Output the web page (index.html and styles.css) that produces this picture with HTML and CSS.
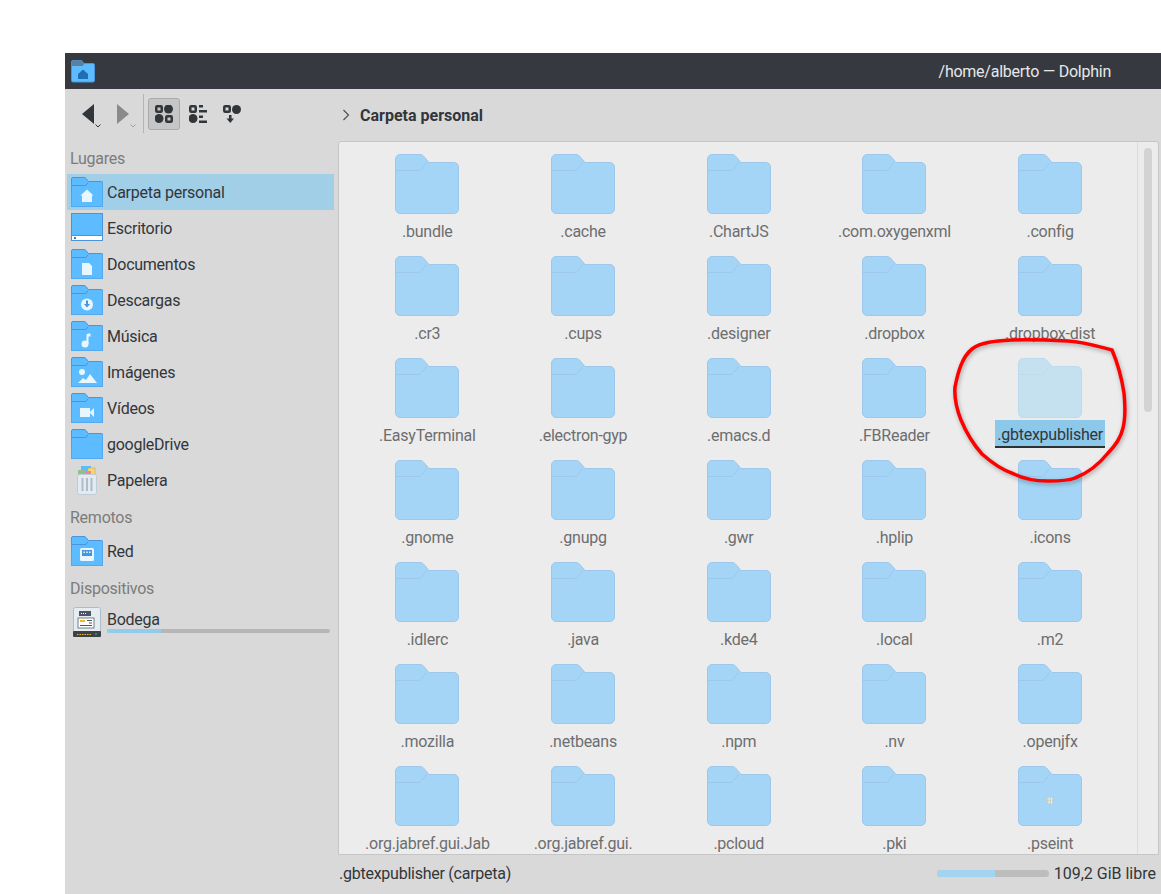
FILE: index.html
```html
<!DOCTYPE html>
<html lang="es">

<head>
    <meta charset="UTF-8">
    <title>/home/alberto — Dolphin</title>
    <link rel="stylesheet" href="styles.css">
</head>

<body>
    <svg class="defs" width="0" height="0">
        <!-- carpeta grande -->
        <symbol id="folder" viewBox="0 0 64 60">
            <path d="M.5 5a4.500 4.500 0 0 1 4.500-4.500h20a5 5 0 0 1 3.500 1.500l5.500 6.500h25a4.500 4.500 0 0 1 4.500 4.500v42a4.500 4.500 0 0 1-4.500 4.500h-54a4.500 4.500 0 0 1-4.500-4.500z" fill="currentColor" stroke="var(--edge)" />
            <path d="M.5 16.500h23q2 0 3-1.500l5-6.500" fill="none" stroke="var(--edge)" />
        </symbol>
        <!-- carpeta lateral -->
        <symbol id="place" viewBox="0 0 32 30">
            <path d="M.5 2a1.500 1.500 0 0 1 1.500-1.500h11q1 0 2 1l2.500 3h13a1.500 1.500 0 0 1 1.500 1.500v22.500a1.500 1.500 0 0 1-1.500 1.500h-29a1.500 1.500 0 0 1-1.500-1.500z" fill="#5cbcff" stroke="#4a94dc" />
            <path d="M1 8.500h14l2-3" fill="none" stroke="#4a94dc" />
        </symbol>
    </svg>

    <div class="window">
        <header class="titlebar">
            <svg class="app-icon" viewBox="0 0 24 23">
                <path d="M.5 2a1.500 1.500 0 0 1 1.500-1.500h8q1 0 1.500 1l1.500 2h9a1.500 1.500 0 0 1 1.500 1.500v15.500a1.500 1.500 0 0 1-1.500 1.500h-20a1.500 1.500 0 0 1-1.500-1.500z" fill="#5cbcff" stroke="#4a94dc" />
                <path d="M.5 2a1.500 1.500 0 0 1 1.500-1.500h8q1 0 1.500 1l1.500 2-1 2.500h-11.500z" fill="#5d7f9e" />
                <path d="M12 9.500l5 4.500v5h-10v-5z" fill="#1f6fb5" />
            </svg>
            <span class="title">/home/alberto — Dolphin</span>
        </header>

        <div class="toolbar">
            <button class="tool nav">
                <svg width="12" height="20" viewBox="0 0 12 20"><path d="M12 0v20L0 10z" fill="#31363b" /></svg>
                <svg class="caret" width="6" height="4" viewBox="0 0 6 4"><path d="M.5.500L3 3 5.500.500" fill="none" stroke="#31363b" /></svg>
            </button>
            <button class="tool nav nav-next">
                <svg width="12" height="20" viewBox="0 0 12 20"><path d="M0 0v20l12-10z" fill="#8a8a8a" /></svg>
                <svg class="caret" width="6" height="4" viewBox="0 0 6 4"><path d="M.5.500L3 3 5.500.500" fill="none" stroke="#a0a0a0" /></svg>
            </button>
            <span class="sep"></span>
            <button class="tool active">
                <svg width="18" height="18" viewBox="0 0 18 18" fill="#31363b">
                    <rect x="1.250" y="1.250" width="5.500" height="5.500" rx="1" fill="none" stroke="#31363b" stroke-width="2.500" />
                    <circle cx="13.500" cy="4" r="4.500" />
                    <circle cx="4" cy="13.500" r="4.500" />
                    <rect x="11.250" y="11.250" width="5.500" height="5.500" rx="1" fill="none" stroke="#31363b" stroke-width="2.500" />
                </svg>
            </button>
            <button class="tool">
                <svg width="18" height="18" viewBox="0 0 18 18" fill="#31363b">
                    <rect x="1.250" y="1.250" width="5.500" height="5.500" rx="1" fill="none" stroke="#31363b" stroke-width="2.500" />
                    <rect x="10" y="0" width="4" height="2.500" />
                    <rect x="10" y="5" width="8" height="2.500" />
                    <circle cx="4" cy="13.500" r="4.500" />
                    <rect x="10" y="10.500" width="4" height="2.500" />
                    <rect x="10" y="15.500" width="8" height="2.500" />
                </svg>
            </button>
            <button class="tool">
                <svg width="18" height="18" viewBox="0 0 18 18" fill="#31363b">
                    <rect x="1.250" y="1.250" width="5.500" height="5.500" rx="1" fill="none" stroke="#31363b" stroke-width="2.500" />
                    <circle cx="13.500" cy="4.500" r="4.500" />
                    <rect x="6" y="10" width="2.500" height="4" />
                    <path d="M3.500 13.500h7.500L7.250 18z" />
                </svg>
            </button>
            <svg class="crumb-arrow" width="8" height="12" viewBox="0 0 8 12"><path d="M1.500 1l5 5-5 5" fill="none" stroke="#4d5257" stroke-width="1.200" /></svg>
            <span class="crumb">Carpeta personal</span>
        </div>

        <div class="main">
            <aside class="sidebar">
                <h2 class="group">Lugares</h2>
                <div class="place selected">
                    <span class="place-icon">
                        <svg viewBox="0 0 32 30"><use href="#place" /><path d="M16 12.500l6.500 6h-1.500v6.500h-10v-6.500h-1.500z" fill="#e8f7ff" /></svg>
                    </span>
                    Carpeta personal
                </div>
                <div class="place">
                    <span class="place-icon">
                        <svg viewBox="0 0 32 30">
                            <rect x=".5" y=".5" width="31" height="27" fill="#5cbcff" stroke="#4a94dc" />
                            <rect x=".5" y="22.500" width="31" height="5" fill="#fff" stroke="#4a94dc" />
                            <rect x="3" y="24" width="2" height="2" fill="#2f7fd0" />
                        </svg>
                    </span>
                    Escritorio
                </div>
                <div class="place">
                    <span class="place-icon">
                        <svg viewBox="0 0 32 30"><use href="#place" /><path d="M11 14h7l3 3v9h-10z" fill="#e8f7ff" /></svg>
                    </span>
                    Documentos
                </div>
                <div class="place">
                    <span class="place-icon">
                        <svg viewBox="0 0 32 30"><use href="#place" /><circle cx="16" cy="19.500" r="6" fill="#e8f7ff" /><path d="M15 15.500h2v3.500h2l-3 3.500-3-3.500h2z" fill="#4a94dc" /></svg>
                    </span>
                    Descargas
                </div>
                <div class="place">
                    <span class="place-icon">
                        <svg viewBox="0 0 32 30"><use href="#place" /><circle cx="14" cy="23" r="3.500" fill="#e8f7ff" /><path d="M15.500 23v-9q0-1.500 2-1.500h2v3h-2v7.500z" fill="#e8f7ff" /></svg>
                    </span>
                    Música
                </div>
                <div class="place">
                    <span class="place-icon">
                        <svg viewBox="0 0 32 30"><use href="#place" /><circle cx="11" cy="15" r="3" fill="#e8f7ff" /><path d="M7 26l5-5 3 2 4-6 7 9z" fill="#e8f7ff" /></svg>
                    </span>
                    Imágenes
                </div>
                <div class="place">
                    <span class="place-icon">
                        <svg viewBox="0 0 32 30"><use href="#place" /><rect x="9" y="15" width="10" height="9" fill="#e8f7ff" /><path d="M19 19l4-4v9l-4-4z" fill="#e8f7ff" /></svg>
                    </span>
                    Vídeos
                </div>
                <div class="place">
                    <span class="place-icon">
                        <svg viewBox="0 0 32 30"><use href="#place" /></svg>
                    </span>
                    googleDrive
                </div>
                <div class="place">
                    <span class="place-icon">
                        <svg viewBox="0 0 32 30">
                            <rect x="10" y="1" width="10" height="10" fill="#5cbcff" />
                            <rect x="17" y="3" width="7" height="8" fill="#f6d77d" stroke="#c9a94c" stroke-width=".6" />
                            <rect x="7" y="5" width="8" height="6" fill="#8fc08f" />
                            <rect x="15" y="6" width="5" height="5" fill="#f08a8a" />
                            <rect x="6.500" y="9.500" width="19" height="20" rx="2" fill="#e3ebf0" stroke="#bfcdd8" />
                            <path d="M11.500 13v13M16 13v13M20.500 13v13" stroke="#aebdca" stroke-width="2" />
                        </svg>
                    </span>
                    Papelera
                </div>

                <h2 class="group spaced">Remotos</h2>
                <div class="place">
                    <span class="place-icon">
                        <svg viewBox="0 0 32 30">
                            <use href="#place" />
                            <rect x="9" y="12" width="14" height="13" rx="1.500" fill="#e8f7ff" />
                            <rect x="11" y="14" width="10" height="6" fill="#4a94dc" />
                            <path d="M12.500 15.500h1.500v1.500h-1.500zM15.300 15.500h1.500v1.500h-1.500zM18 15.500h1.500v1.500h-1.500z" fill="#e8f7ff" />
                        </svg>
                    </span>
                    Red
                </div>

                <h2 class="group spaced">Dispositivos</h2>
                <div class="place device">
                    <span class="place-icon">
                        <svg viewBox="0 0 32 30">
                            <rect x="2.500" y=".5" width="27" height="29" rx="2" fill="#e6edf2" stroke="#aebcc8" />
                            <rect x="8" y="4" width="12" height="5" fill="#4b5563" />
                            <path d="M10 6.500h1M12 6.500h1M14 6.500h1" stroke="#fff" />
                            <rect x="7" y="11" width="16" height="10" fill="#fff" stroke="#56606a" stroke-width=".8" />
                            <rect x="9" y="13" width="5" height="2" fill="#f2b91e" />
                            <path d="M16 13.500h5M18 16h3M9 18.500h12" stroke="#4b5563" />
                            <rect x="2" y="24" width="28" height="6" rx="1" fill="#3a4149" />
                            <path d="M6 27.500h15" stroke="#f2b91e" stroke-dasharray="1.500 1" />
                            <path d="M24 27h2" stroke="#3fbfa0" />
                        </svg>
                    </span>
                    <span class="device-info">
                        <span class="device-name">Bodega</span>
                        <span class="meter"><span class="meter-fill" style="width: 24%"></span></span>
                    </span>
                </div>
            </aside>

            <section class="panel">
                <div class="files">
                    <div class="file"><svg class="folder"><use href="#folder" /></svg><span class="name">.bundle</span></div>
                    <div class="file"><svg class="folder"><use href="#folder" /></svg><span class="name">.cache</span></div>
                    <div class="file"><svg class="folder"><use href="#folder" /></svg><span class="name">.ChartJS</span></div>
                    <div class="file"><svg class="folder"><use href="#folder" /></svg><span class="name">.com.oxygenxml</span></div>
                    <div class="file"><svg class="folder"><use href="#folder" /></svg><span class="name">.config</span></div>

                    <div class="file"><svg class="folder"><use href="#folder" /></svg><span class="name">.cr3</span></div>
                    <div class="file"><svg class="folder"><use href="#folder" /></svg><span class="name">.cups</span></div>
                    <div class="file"><svg class="folder"><use href="#folder" /></svg><span class="name">.designer</span></div>
                    <div class="file"><svg class="folder"><use href="#folder" /></svg><span class="name">.dropbox</span></div>
                    <div class="file"><svg class="folder"><use href="#folder" /></svg><span class="name">.dropbox-dist</span></div>

                    <div class="file"><svg class="folder"><use href="#folder" /></svg><span class="name">.EasyTerminal</span></div>
                    <div class="file"><svg class="folder"><use href="#folder" /></svg><span class="name">.electron-gyp</span></div>
                    <div class="file"><svg class="folder"><use href="#folder" /></svg><span class="name">.emacs.d</span></div>
                    <div class="file"><svg class="folder"><use href="#folder" /></svg><span class="name">.FBReader</span></div>
                    <div class="file current"><svg class="folder"><use href="#folder" /></svg><span class="name">.gbtexpublisher</span></div>

                    <div class="file"><svg class="folder"><use href="#folder" /></svg><span class="name">.gnome</span></div>
                    <div class="file"><svg class="folder"><use href="#folder" /></svg><span class="name">.gnupg</span></div>
                    <div class="file"><svg class="folder"><use href="#folder" /></svg><span class="name">.gwr</span></div>
                    <div class="file"><svg class="folder"><use href="#folder" /></svg><span class="name">.hplip</span></div>
                    <div class="file"><svg class="folder"><use href="#folder" /></svg><span class="name">.icons</span></div>

                    <div class="file"><svg class="folder"><use href="#folder" /></svg><span class="name">.idlerc</span></div>
                    <div class="file"><svg class="folder"><use href="#folder" /></svg><span class="name">.java</span></div>
                    <div class="file"><svg class="folder"><use href="#folder" /></svg><span class="name">.kde4</span></div>
                    <div class="file"><svg class="folder"><use href="#folder" /></svg><span class="name">.local</span></div>
                    <div class="file"><svg class="folder"><use href="#folder" /></svg><span class="name">.m2</span></div>

                    <div class="file"><svg class="folder"><use href="#folder" /></svg><span class="name">.mozilla</span></div>
                    <div class="file"><svg class="folder"><use href="#folder" /></svg><span class="name">.netbeans</span></div>
                    <div class="file"><svg class="folder"><use href="#folder" /></svg><span class="name">.npm</span></div>
                    <div class="file"><svg class="folder"><use href="#folder" /></svg><span class="name">.nv</span></div>
                    <div class="file"><svg class="folder"><use href="#folder" /></svg><span class="name">.openjfx</span></div>

                    <div class="file"><svg class="folder"><use href="#folder" /></svg><span class="name">.org.jabref.gui.Jab</span></div>
                    <div class="file"><svg class="folder"><use href="#folder" /></svg><span class="name">.org.jabref.gui.</span></div>
                    <div class="file"><svg class="folder"><use href="#folder" /></svg><span class="name">.pcloud</span></div>
                    <div class="file"><svg class="folder"><use href="#folder" /></svg><span class="name">.pki</span></div>
                    <div class="file">
                        <svg class="folder" viewBox="0 0 64 60">
                            <use href="#folder" width="64" height="60" />
                            <rect x="28" y="31" width="8" height="7" rx="2" fill="#bccbc4" />
                            <path d="M29 33h6M29 36h6M31 31v7M33.500 31v7" stroke="#eef2e6" stroke-width=".7" />
                        </svg>
                        <span class="name">.pseint</span>
                    </div>
                </div>
                <div class="scrollbar"><span class="thumb"></span></div>
            </section>
        </div>

        <footer class="status">
            <span>.gbtexpublisher (carpeta)</span>
            <span class="free">
                <span class="meter free-meter"><span class="meter-fill" style="width: 52%"></span></span>
                <span class="free-text">109,2 GiB libre</span>
            </span>
        </footer>
    </div>

    <!-- circulo rojo dibujado a mano encima de la captura -->
    <svg class="scribble" width="1161" height="894" viewBox="0 0 1161 894">
        <path d="M1112 350C1100 347 1085 342 1068 341C1050 340 1030 339 1012 340C995 341 981 342 972 349C962 357 958 372 955 387C954 400 957 410 961 420C966 432 973 444 982 454C992 463 1002 470 1014 474C1024 479 1036 481 1048 481C1058 481 1068 481 1075 478C1088 473 1100 463 1108 453C1116 445 1121 437 1123 428C1126 416 1125 403 1124 393C1122 380 1118 364 1112 350" />
    </svg>
</body>

</html>
```

FILE: styles.css
```css
* {
    padding: 0;
    margin: 0;
    box-sizing: border-box;
}

html,
body {
    height: 894px;
    overflow: hidden;
    background: #fff;
}

body {
    padding: 53px 0 0 65px;
    font: 16px/24px Roboto, "Liberation Sans", sans-serif;
    letter-spacing: -0.25px;
    color: #31363b;
}

.defs {
    position: absolute;
}

svg {
    display: block;
}

.window {
    display: flex;
    flex-direction: column;
    height: 841px;
    background: #d9d9d9;
}

/* barra de titulo */
.titlebar {
    display: flex;
    justify-content: space-between;
    align-items: center;
    flex: none;
    height: 36px;
    padding: 0 50px 0 6px;
    background: #363a40;
}

.app-icon {
    width: 24px;
    height: 23px;
}

.title {
    margin-top: 2px;
    color: #e6e8ea;
}

/* herramientas */
.toolbar {
    display: flex;
    align-items: center;
    flex: none;
    height: 52px;
    padding: 0 0 3px 8px;
}

.tool {
    display: flex;
    align-items: center;
    justify-content: center;
    width: 32px;
    height: 32px;
    margin-right: 2px;
    border: 1px solid transparent;
    border-radius: 3px;
    background: none;
}

.tool.active {
    background: #c6c6c6;
    border-color: #aaa;
}

.nav {
    position: relative;
    justify-content: flex-start;
    width: 36px;
    margin: 0;
    padding-left: 8px;
}

.nav-next {
    margin: 0 1px 0 -1px;
}

.caret {
    position: absolute;
    left: 21px;
    bottom: 1px;
}

.sep {
    width: 1px;
    height: 39px;
    margin: 0 4px 0 -2px;
    background: #b4b4b4;
}

.crumb-arrow {
    margin: 2px 0 0 92px;
}

.crumb {
    margin: 4px 0 0 10px;
    font-weight: 700;
    letter-spacing: 0;
}

.main {
    display: flex;
    flex: 1;
    min-height: 0;
}

/* lugares */
.sidebar {
    flex: none;
    width: 273px;
    padding: 5px 4px 0 2px;
}

.group {
    height: 24px;
    margin: 0 0 4px 3px;
    padding-top: 1px;
    font-size: 16px;
    font-weight: 400;
    color: #7c7c7c;
}

.group.spaced {
    margin-top: 7px;
}

.place {
    display: flex;
    align-items: center;
    gap: 4px;
    height: 36px;
    padding: 2px 0 0 4px;
}

.place.selected {
    background: #a1cfe7;
}

.place-icon {
    margin-top: -2px;
}

.place-icon svg {
    width: 32px;
    height: 30px;
}

.device-info {
    display: flex;
    flex-direction: column;
    flex: 1;
    margin-right: 4px;
}

.device-name {
    height: 21px;
    margin-top: -5px;
}

.meter {
    display: block;
    height: 4px;
    border-radius: 2px;
    background: #b6b6b6;
    overflow: hidden;
}

.meter-fill {
    display: block;
    height: 100%;
    background: #92cbeb;
}

/* archivos */
.panel {
    display: flex;
    flex: none;
    width: 821px;
    border: 1px solid #c6c6c6;
    border-radius: 3px 3px 0 0;
    background: #ececec;
    overflow: hidden;
}

.files {
    display: grid;
    grid-template-columns: repeat(5, 155.7px);
    grid-auto-rows: 102px;
    flex: none;
    width: 799px;
    padding: 12px 0 0 10.500px;
    border-right: 1px solid #dcdcdc;
}

.file {
    display: flex;
    flex-direction: column;
    align-items: center;
    color: #a4d5f6;
    --edge: #9dc8ec;
}

.folder {
    flex: none;
    width: 64px;
    height: 60px;
    margin-bottom: 6px;
}

.name {
    color: #6c6e70;
    white-space: nowrap;
}

.current {
    color: #c5e0ef;
    --edge: #bcdbee;
}

.current .folder {
    margin-bottom: 2px;
}

.current .name {
    height: 28px;
    padding: 3px 2px 0;
    background: #8cc8ea;
    border-bottom: 2px solid #2c3136;
    color: #31363b;
}

.scrollbar {
    flex: 1;
    padding: 6px 0 0 6px;
}

.thumb {
    display: block;
    width: 8px;
    height: 264px;
    border-radius: 4px;
    background: #d3d3d3;
}

/* estado */
.status {
    display: flex;
    justify-content: space-between;
    align-items: center;
    flex: none;
    height: 39px;
    padding: 0 5px 2px 274px;
}

.free {
    display: flex;
    align-items: center;
    gap: 5px;
}

.free-text {
    letter-spacing: 0;
}

.free-meter {
    width: 112px;
    height: 7px;
    border-radius: 4px;
    background: #bdbdbd;
}

.free-meter .meter-fill {
    background: #a3d4ef;
}

/* anotacion */
.scribble {
    position: absolute;
    left: 0;
    top: 0;
    pointer-events: none;
    filter: drop-shadow(1px 2px 2px rgba(0, 0, 0, 0.3));
}

.scribble path {
    fill: none;
    stroke: #f00;
    stroke-width: 3.500;
    stroke-linecap: round;
}
```
